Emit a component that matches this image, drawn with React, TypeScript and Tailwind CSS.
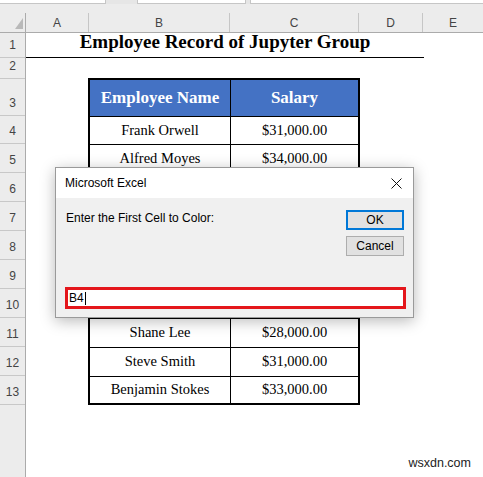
import React from "react"

const columns = [
  { name: "A", w: "w-[63px]" },
  { name: "B", w: "w-[141px]" },
  { name: "C", w: "w-[129px]" },
  { name: "D", w: "w-[64px]" },
]

const rowHeaders = [
  { n: 1, h: "h-[25px]" },
  { n: 2, h: "h-[21px]" },
  { n: 3, h: "h-[37px]" },
  { n: 4, h: "h-[28px]" },
  { n: 5, h: "h-[29px]" },
  { n: 6, h: "h-[29px]" },
  { n: 7, h: "h-[29px]" },
  { n: 8, h: "h-[29px]" },
  { n: 9, h: "h-[29px]" },
  { n: 10, h: "h-[29px]" },
  { n: 11, h: "h-[29px]" },
  { n: 12, h: "h-[29px]" },
  { n: 13, h: "h-[29px]" },
]

// rows 6-10 sit under the dialog
const records = [
  { name: "Frank Orwell", salary: "$31,000.00", h: "h-[28px]" },
  { name: "Alfred Moyes", salary: "$34,000.00", h: "h-[29px]" },
  { name: "", salary: "", h: "h-[29px]" },
  { name: "", salary: "", h: "h-[29px]" },
  { name: "", salary: "", h: "h-[29px]" },
  { name: "", salary: "", h: "h-[29px]" },
  { name: "", salary: "", h: "h-[29px]" },
  { name: "Shane Lee", salary: "$28,000.00", h: "h-[29px]" },
  { name: "Steve Smith", salary: "$31,000.00", h: "h-[29px]" },
  { name: "Benjamin Stokes", salary: "$33,000.00", h: "h-[27px]" },
]

const ui = { fontFamily: '"Liberation Sans", Arial, sans-serif' }
const serif = { fontFamily: '"Liberation Serif", "Times New Roman", serif' }

export default function App() {
  return (
    <div className="relative w-[483px] h-[477px] overflow-hidden bg-white" style={ui}>
      {/* formula bar remnant */}
      <div className="flex h-[4px] bg-[#e6e6e6]">
        <div className="w-[106px] bg-white border-r border-b border-[#c6c6c6]" />
        <div className="w-[31px]" />
        <div className="w-[109px] bg-white border-x border-b border-[#c6c6c6]" />
        <div className="w-[4px]" />
        <div className="flex-1 bg-white border-l border-b border-[#c6c6c6]" />
      </div>

      {/* column headers */}
      <div className="flex h-[29px] pt-[9px] bg-[#ececec] border-b border-[#ababab] text-[12px] text-[#444]">
        <div className="relative w-[26px] border-r border-[#ababab]">
          <svg className="absolute left-[15px] top-[5px]" width="8" height="11" viewBox="0 0 8 11">
            <polygon points="8,0 8,11 0,11" fill="#b9b9b9" />
          </svg>
        </div>
        {columns.map((c) => (
          <div
            key={c.name}
            className={`${c.w} flex items-center justify-center border-r border-[#c6c6c6]`}
          >
            {c.name}
          </div>
        ))}
        <div className="flex-1 flex items-center justify-center">E</div>
      </div>

      <div className="flex">
        {/* row headers */}
        <div className="w-[26px] h-[444px] bg-[#ececec] border-r border-[#ababab] flex flex-col text-[12px] text-[#444]">
          {rowHeaders.map((r) => (
            <div
              key={r.n}
              className={`${r.h} flex items-end justify-center pb-[3px] border-b border-[#c8c8c8]`}
            >
              {r.n}
            </div>
          ))}
        </div>

        {/* sheet */}
        <div className="flex-1 flex flex-col">
          <div
            className="h-[25px] w-[398px] border-b border-black flex items-end justify-center pb-[1px] text-[19px] font-bold text-black"
            style={serif}
          >
            Employee Record of Jupyter Group
          </div>
          <div className="h-[20px]" />

          <div className="ml-[62px] w-[272px] border-2 border-black" style={serif}>
            <div className="flex h-[36px] bg-[#4472c4] text-white text-[17px] font-bold">
              <div className="w-[141px] border-r border-black flex items-center justify-center">
                Employee Name
              </div>
              <div className="flex-1 flex items-center justify-center">Salary</div>
            </div>
            {records.map((r, i) => (
              <div key={i} className={`flex ${r.h} border-t border-black text-[14.5px] text-black`}>
                <div className="w-[141px] border-r border-black flex items-center justify-center">
                  {r.name}
                </div>
                <div className="flex-1 flex items-center justify-center">{r.salary}</div>
              </div>
            ))}
          </div>
        </div>
      </div>

      <div className="absolute right-[12px] bottom-[4px] text-[12.5px] text-[#222]">wsxdn.com</div>

      {/* input box dialog */}
      <div className="absolute left-[55px] top-[167px] w-[359px] h-[151px] flex flex-col border border-[#9a9a9a] bg-[#f0f0f0] shadow-[0_3px_14px_rgba(0,0,0,0.28)] text-[12px] text-black">
        <div className="h-[30px] bg-white flex items-center justify-between pl-[9px] pr-[10px]">
          <span>Microsoft Excel</span>
          <svg width="11" height="11" viewBox="0 0 11 11" className="mr-[1px]">
            <path d="M0.5 0.5 L10.5 10.5 M10.5 0.5 L0.5 10.5" stroke="#111" strokeWidth="1" />
          </svg>
        </div>
        <div className="flex-1 flex flex-col pl-[9px] pr-[7px] pt-[12px] pb-[8px]">
          <div className="flex justify-between pr-[2px]">
            <span className="pl-[1px] leading-[14px] pt-[1px]">Enter the First Cell to Color:</span>
            <div className="flex flex-col gap-[6px]">
              <button className="w-[58px] h-[20px] bg-[#e1e1e1] border-2 border-[#0078d7] flex items-center justify-center text-[12px]">
                OK
              </button>
              <button className="w-[58px] h-[20px] bg-[#e1e1e1] border border-[#adadad] flex items-center justify-center text-[12px]">
                Cancel
              </button>
            </div>
          </div>
          <div className="mt-auto w-[341px] h-[22px] bg-white border-[3px] border-[#e4161b] flex items-center pl-[1px] text-[12px]">
            <span>B4</span>
            <span className="ml-[1px] w-[1px] h-[13px] bg-black" />
          </div>
        </div>
      </div>
    </div>
  )
}
